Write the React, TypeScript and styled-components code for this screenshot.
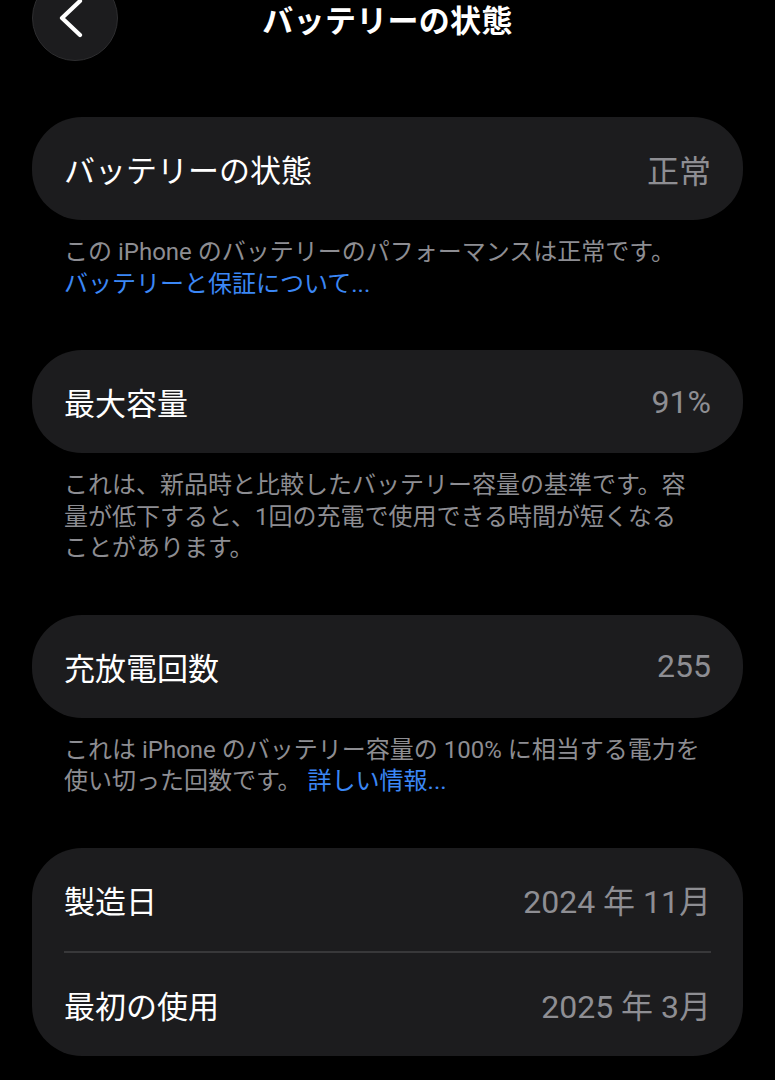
import styled, { createGlobalStyle } from 'styled-components';

const GlobalStyle = createGlobalStyle`
    html, body {
        margin: 0;
        padding: 0;
        background: #000;
    }
    body {
        font-family: 'Roboto', 'Noto Sans CJK JP', sans-serif;
        color: #fff;
        -webkit-font-smoothing: antialiased;
    }
`;

type Row = { label: string; value: string };

const App = () => {
    return (
        <>
            <GlobalStyle />
            <Page>
                <Header>
                    <BackButton aria-label="戻る">
                        <svg width="26" height="40" viewBox="0 0 26 40" fill="none">
                            <polyline
                                points="21,3 3,20 21,37"
                                stroke="#fff"
                                strokeWidth="4.2"
                                strokeLinecap="round"
                                strokeLinejoin="round"
                            />
                        </svg>
                    </BackButton>
                    <Title>バッテリーの状態</Title>
                    <span />
                </Header>

                <Section>
                    <Card rows={[{ label: 'バッテリーの状態', value: '正常' }]} />
                    <Footer>
                        この iPhone のバッテリーのパフォーマンスは正常です。
                        <br />
                        <Link>バッテリーと保証について...</Link>
                    </Footer>
                </Section>

                <Section>
                    <Card rows={[{ label: '最大容量', value: '91%' }]} />
                    <Footer>
                        これは、新品時と比較したバッテリー容量の基準です。容
                        <br />
                        量が低下すると、1回の充電で使用できる時間が短くなる
                        <br />
                        ことがあります。
                    </Footer>
                </Section>

                <Section>
                    <Card rows={[{ label: '充放電回数', value: '255' }]} />
                    <Footer>
                        これは iPhone のバッテリー容量の 100% に相当する電力を
                        <br />
                        使い切った回数です。 <Link>詳しい情報...</Link>
                    </Footer>
                </Section>

                <Section>
                    <Card
                        rows={[
                            { label: '製造日', value: '2024 年 11月' },
                            { label: '最初の使用', value: '2025 年 3月' }
                        ]}
                    />
                </Section>
            </Page>
        </>
    );
};

const Card = ({ rows }: { rows: Row[] }) => (
    <Group>
        {rows.map((row, i) => (
            <div key={row.label}>
                {i > 0 && <Divider />}
                <Item>
                    <Label>{row.label}</Label>
                    <Value>{row.value}</Value>
                </Item>
            </div>
        ))}
    </Group>
);

export default App;

const Page = styled.main`
    width: 775px;
    height: 1080px;
    overflow: hidden;
    box-sizing: border-box;
    padding: 0 32px;
`;

const Header = styled.header`
    display: grid;
    grid-template-columns: 86px 1fr 86px;
    align-items: center;
    height: 86px;
    margin-top: -25px;
    margin-bottom: 56px;
`;

const BackButton = styled.button`
    width: 86px;
    height: 86px;
    border-radius: 50%;
    background: #1c1c1e;
    border: 1.5px solid #2e2e30;
    display: flex;
    align-items: center;
    justify-content: center;
    padding: 0 6px 0 0;
    cursor: pointer;
`;

const Title = styled.h1`
    margin: 0;
    text-align: center;
    font-size: 31px;
    font-weight: 700;
    letter-spacing: 0.3px;
    color: #fff;
`;

const Section = styled.section`
    margin-bottom: 50px;
`;

const Group = styled.div`
    background: #1c1c1e;
    border-radius: 50px;
    overflow: hidden;
`;

const Item = styled.div`
    display: flex;
    align-items: center;
    justify-content: space-between;
    height: 103px;
    padding: 0 32px;
`;

const Label = styled.span`
    font-size: 31px;
    color: #fff;
`;

const Value = styled.span`
    font-size: 32px;
    color: #8e8e93;
`;

const Divider = styled.div`
    height: 2px;
    margin: 0 32px;
    background: #38383a;
`;

const Footer = styled.p`
    margin: 0;
    padding: 17px 32px 0;
    font-size: 24px;
    line-height: 31.5px;
    color: #8d8d92;
`;

const Link = styled.span`
    color: #3b87f5;
`;
